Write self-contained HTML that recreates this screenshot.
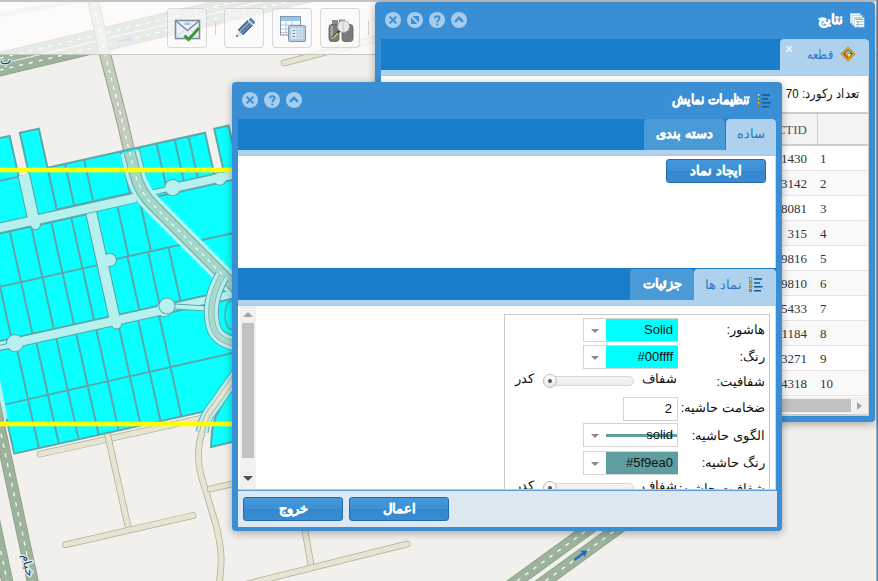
<!DOCTYPE html>
<html><head><meta charset="utf-8">
<style>
*{box-sizing:border-box;margin:0;padding:0}
html,body{width:878px;height:581px;overflow:hidden;background:#f2f0ec;font-family:"Liberation Sans",sans-serif;}
.abs{position:absolute}
#map{position:absolute;left:0;top:0;width:878px;height:581px}
#topbar{position:absolute;left:0;top:0;width:878px;height:2px;background:#c4c4c4}
#toolbar{position:absolute;left:0;top:2px;width:878px;height:53px;background:rgba(255,255,255,0.74);border-bottom:1px solid #c6c6c4}
.tb{position:absolute;top:8px;width:40px;height:40px;border:1px solid rgba(190,190,190,0.55);border-radius:4px;background:rgba(250,250,250,0.5)}
.tb svg{position:absolute;left:0;top:0}
.sep{position:absolute;top:21px;width:1px;height:14px;background:#d2d2d2}
.win{position:absolute;background:#3a8fd4;border-radius:4px;box-shadow:0 2px 8px rgba(0,0,0,0.32)}
.ttl{position:absolute;color:#fff;font-weight:bold;font-size:14px;direction:rtl;white-space:nowrap;-webkit-text-stroke:0.35px #fff}
.ic{position:absolute;top:10px;width:16px;height:16px}
.strip{position:absolute;background:#187ecb}
.lstrip{position:absolute;background:#aed2ee}
.tab{position:absolute;border-radius:4px 4px 0 0;text-align:center;direction:rtl;white-space:nowrap;font-size:13px}
.tab.act{background:#aed2ee;color:#2a78c2}
.tab.ina{background:#4b9ad8;color:#fff;font-weight:bold;-webkit-text-stroke:0.3px #fff}
.btn{position:absolute;border:1px solid #1e6cb4;border-radius:3px;background:linear-gradient(#4597da 0%,#3d90d6 50%,#3587cd 51%,#3a8bd0 100%);color:#fff;font-weight:bold;font-size:13px;text-align:center;direction:rtl;-webkit-text-stroke:0.3px #fff}
.lbl{position:absolute;font-size:13px;direction:rtl;white-space:nowrap;color:#111;line-height:16px}
.sel{position:absolute;border:1px solid #d4d4d4;background:#fff;width:95px;height:24px}
.sel .arr{position:absolute;left:7px;top:10px;width:0;height:0;border-left:4px solid transparent;border-right:4px solid transparent;border-top:4.5px solid #8a8a8a}
.sel .val{position:absolute;left:22px;top:0;width:72px;height:22px;font-size:13px;text-align:right;padding-right:5px;line-height:22px;color:#111}
.row{position:absolute;left:0;width:488px;height:25px;border-bottom:1px solid #e6e6e6}
.cell{position:absolute;font-family:"Liberation Serif",serif;font-size:13px;color:#333;line-height:25px;white-space:nowrap}
.slider{position:absolute;width:91px;height:10px;border:1px solid #d6d6d6;border-radius:5px;background:linear-gradient(#f4f4f4,#ececec)}
.knob{position:absolute;left:-1px;top:-3px;width:14px;height:14px;border-radius:50%;border:1px solid #bdbdbd;background:linear-gradient(#fff,#e6e6e6)}
.knob:after{content:"";position:absolute;left:4px;top:4px;width:4px;height:4px;border-radius:50%;background:#555}
</style></head><body>
<svg id="map" width="878" height="581" viewBox="0 0 878 581"><rect width="878" height="581" fill="#f2f0ec"/><path d="M40.2,454.1 L244.3,408.8" fill="none" stroke="#a9b09a" stroke-width="6.7" stroke-linecap="round" stroke-linejoin="round"/><path d="M40.2,454.1 L244.3,408.8" fill="none" stroke="#e7e5d1" stroke-width="5.2" stroke-linecap="round" stroke-linejoin="round"/><path d="M107.7,435.0 L128.7,529.7" fill="none" stroke="#a9b09a" stroke-width="6.7" stroke-linecap="round" stroke-linejoin="round"/><path d="M107.7,435.0 L128.7,529.7" fill="none" stroke="#e7e5d1" stroke-width="5.2" stroke-linecap="round" stroke-linejoin="round"/><path d="M65.5,544.7 L193.1,515.4" fill="none" stroke="#a9b09a" stroke-width="6.7" stroke-linecap="round" stroke-linejoin="round"/><path d="M65.5,544.7 L193.1,515.4" fill="none" stroke="#e7e5d1" stroke-width="5.2" stroke-linecap="round" stroke-linejoin="round"/><path d="M205,425 C199,438 196,455 201,475 L216,525 C221,545 223,560 219,585" fill="none" stroke="#a9b09a" stroke-width="6.7"/><path d="M205,425 C199,438 196,455 201,475 L216,525 C221,545 223,560 219,585" fill="none" stroke="#e7e5d1" stroke-width="5.2"/><path d="M210.0,489.0 L240.0,482.0" fill="none" stroke="#a9b09a" stroke-width="6.7" stroke-linecap="round" stroke-linejoin="round"/><path d="M210.0,489.0 L240.0,482.0" fill="none" stroke="#e7e5d1" stroke-width="5.2" stroke-linecap="round" stroke-linejoin="round"/><path d="M304.0,525.0 L311.0,565.0" fill="none" stroke="#a9b09a" stroke-width="6.7" stroke-linecap="round" stroke-linejoin="round"/><path d="M304.0,525.0 L311.0,565.0" fill="none" stroke="#e7e5d1" stroke-width="5.2" stroke-linecap="round" stroke-linejoin="round"/><path d="M243.0,585.0 L407.0,544.0" fill="none" stroke="#a9b09a" stroke-width="6.7" stroke-linecap="round" stroke-linejoin="round"/><path d="M243.0,585.0 L407.0,544.0" fill="none" stroke="#e7e5d1" stroke-width="5.2" stroke-linecap="round" stroke-linejoin="round"/><path d="M284.0,63.0 L380.0,38.0" fill="none" stroke="#a9b09a" stroke-width="6.5" stroke-linecap="round" stroke-linejoin="round"/><path d="M284.0,63.0 L380.0,38.0" fill="none" stroke="#e7e5d1" stroke-width="5" stroke-linecap="round" stroke-linejoin="round"/><path d="M315,52 L385,42" stroke="#c9ccc0" stroke-width="1" fill="none"/><path d="M-10.0,60.5 L330.0,-20.5" stroke="#869c86" stroke-width="12.5" fill="none"/><path d="M-10.0,60.5 L330.0,-20.5" stroke="#9db39c" stroke-width="11" fill="none"/><path d="M-10.0,60.5 L330.0,-20.5" stroke="#ffffff" stroke-width="1.4" stroke-dasharray="4 6" fill="none" opacity="0.9"/><path d="M-10.0,72.5 L330.0,-8.5" stroke="#869c86" stroke-width="12.5" fill="none"/><path d="M-10.0,72.5 L330.0,-8.5" stroke="#9db39c" stroke-width="11" fill="none"/><path d="M-10.0,72.5 L330.0,-8.5" stroke="#ffffff" stroke-width="1.4" stroke-dasharray="4 6" fill="none" opacity="0.9"/><path d="M-10,66.5 L330,-14.5" stroke="#ffffff" stroke-width="1.2" fill="none" opacity="0.8"/><path d="M-5,16 L80,0" stroke="#d9ddd5" stroke-width="5" fill="none"/><g transform="translate(125,40) rotate(-12)"><path d="M-8,-1 L3,-1 L3,-3.5 L8,0 L3,3.5 L3,1 L-8,1 Z" fill="#4f8fd6"/></g><path d="M92,-5 L105,54 L122,120 L128,146 L134.8,173" stroke="#95a28f" stroke-width="12" fill="none"/><path d="M92,-5 L105,54 L122,120 L128,146 L134.8,173" stroke="#c3ccbd" stroke-width="10" fill="none"/><path d="M92,-5 L105,54 L122,120 L128,146 L134.8,173" stroke="#ffffff" stroke-width="1.3" stroke-dasharray="3.5 5" fill="none"/><path d="M460.4,622.0 L656.0,480.0" stroke="#869c86" stroke-width="12.5" fill="none"/><path d="M460.4,622.0 L656.0,480.0" stroke="#9db39c" stroke-width="11" fill="none"/><path d="M460.4,622.0 L656.0,480.0" stroke="#ffffff" stroke-width="1.4" stroke-dasharray="4 6" fill="none" opacity="0.9"/><path d="M488.8,622.0 L684.8,480.0" stroke="#869c86" stroke-width="12.5" fill="none"/><path d="M488.8,622.0 L684.8,480.0" stroke="#9db39c" stroke-width="11" fill="none"/><path d="M488.8,622.0 L684.8,480.0" stroke="#ffffff" stroke-width="1.4" stroke-dasharray="4 6" fill="none" opacity="0.9"/><g transform="translate(581,555) rotate(-35.9)"><path d="M-8,-1.2 L2,-1.2 L2,-3.5 L8,0 L2,3.5 L2,1.2 L-8,1.2 Z" fill="#1f63a8" stroke="#5f94c8" stroke-width="0.6"/></g><g transform="rotate(-12.5)"><polygon points="-140.0,134.0 -20.0,134.0 -20.0,219.0 -9.4,219.0 -9.4,134.0 10.1,134.0 10.1,174.0 171.4,174.0 171.4,215.0 181.3,215.0 181.3,172.0 196.0,172.0 196.0,216.0 400.0,216.0 400.0,460.0 116.0,460.0 116.0,446.0 -84.3,446.0 -84.3,385.0 -140.0,385.0" fill="#b6f1ef" stroke="none" stroke-width="1.6"/><rect x="-140" y="134.7" width="120" height="83.5" fill="#0affff" stroke="#58a9ab" stroke-width="2"/><line x1="-140" y1="176.5" x2="-20" y2="176.5" stroke="#58a9ab" stroke-width="2"/><rect x="-9.4" y="134" width="19.5" height="84.19999999999999" fill="#0affff" stroke="#58a9ab" stroke-width="2"/><rect x="-20" y="176" width="10.6" height="44" fill="#b6f1ef"/><rect x="10.1" y="174" width="161.3" height="42.80000000000001" fill="#0affff" stroke="#58a9ab" stroke-width="2"/><rect x="90" y="215" width="38" height="11" fill="#0affff"/><line x1="90" y1="219.2" x2="128" y2="219.2" stroke="#58a9ab" stroke-width="2"/><line x1="28" y1="174" x2="28" y2="216.8" stroke="#58a9ab" stroke-width="2"/><line x1="47.5" y1="174" x2="47.5" y2="216.8" stroke="#58a9ab" stroke-width="2"/><line x1="85" y1="174" x2="85" y2="216.8" stroke="#58a9ab" stroke-width="2"/><line x1="103.3" y1="174" x2="103.3" y2="216.8" stroke="#58a9ab" stroke-width="2"/><line x1="121.8" y1="174" x2="121.8" y2="216.8" stroke="#58a9ab" stroke-width="2"/><line x1="140.3" y1="174" x2="140.3" y2="216.8" stroke="#58a9ab" stroke-width="2"/><line x1="154.6" y1="174" x2="154.6" y2="216.8" stroke="#58a9ab" stroke-width="2"/><rect x="181.3" y="172" width="14.699999999999989" height="44.5" fill="#0affff" stroke="#58a9ab" stroke-width="2"/><rect x="-140" y="228" width="178" height="105" fill="#0affff" stroke="#58a9ab" stroke-width="2"/><line x1="-140" y1="280" x2="38" y2="280" stroke="#58a9ab" stroke-width="2"/><line x1="-102" y1="228" x2="-102" y2="333" stroke="#58a9ab" stroke-width="2"/><line x1="-83" y1="228" x2="-83" y2="333" stroke="#58a9ab" stroke-width="2"/><line x1="-62" y1="228" x2="-62" y2="333" stroke="#58a9ab" stroke-width="2"/><line x1="-40.5" y1="228" x2="-40.5" y2="333" stroke="#58a9ab" stroke-width="2"/><line x1="-18.6" y1="228" x2="-18.6" y2="333" stroke="#58a9ab" stroke-width="2"/><line x1="2" y1="228" x2="2" y2="333" stroke="#58a9ab" stroke-width="2"/><line x1="22.5" y1="228" x2="22.5" y2="333" stroke="#58a9ab" stroke-width="2"/><rect x="48" y="226" width="352" height="107" fill="#0affff" stroke="#58a9ab" stroke-width="2"/><line x1="48" y1="278" x2="400" y2="278" stroke="#58a9ab" stroke-width="2"/><line x1="70" y1="226" x2="70" y2="278" stroke="#58a9ab" stroke-width="2"/><line x1="93" y1="226" x2="93" y2="278" stroke="#58a9ab" stroke-width="2"/><line x1="69" y1="278" x2="69" y2="333" stroke="#58a9ab" stroke-width="2"/><line x1="90" y1="278" x2="90" y2="333" stroke="#58a9ab" stroke-width="2"/><line x1="111" y1="278" x2="111" y2="333" stroke="#58a9ab" stroke-width="2"/><rect x="-84.3" y="342" width="484.3" height="104" fill="#0affff" stroke="#58a9ab" stroke-width="2"/><line x1="-84.3" y1="396" x2="400" y2="394" stroke="#58a9ab" stroke-width="2"/><line x1="-59" y1="342" x2="-59" y2="446" stroke="#58a9ab" stroke-width="2"/><line x1="-38.6" y1="342" x2="-38.6" y2="446" stroke="#58a9ab" stroke-width="2"/><line x1="-18.3" y1="342" x2="-18.3" y2="446" stroke="#58a9ab" stroke-width="2"/><line x1="2.2" y1="342" x2="2.2" y2="446" stroke="#58a9ab" stroke-width="2"/><line x1="22.7" y1="342" x2="22.7" y2="446" stroke="#58a9ab" stroke-width="2"/><line x1="45.3" y1="342" x2="45.3" y2="446" stroke="#58a9ab" stroke-width="2"/><line x1="65.6" y1="342" x2="65.6" y2="446" stroke="#58a9ab" stroke-width="2"/><line x1="87" y1="342" x2="87" y2="446" stroke="#58a9ab" stroke-width="2"/></g><g transform="rotate(-12.5)"><line x1="-140" y1="222.5" x2="90" y2="222.5" stroke="#58a9ab" stroke-width="10.5" stroke-linecap="butt"/><line x1="89" y1="221" x2="128" y2="221" stroke="#58a9ab" stroke-width="6" stroke-linecap="butt"/><line x1="128" y1="221" x2="300" y2="221" stroke="#58a9ab" stroke-width="10" stroke-linecap="butt"/><line x1="-14.7" y1="176" x2="-14.7" y2="223" stroke="#58a9ab" stroke-width="12.6" stroke-linecap="butt"/><line x1="43" y1="228" x2="43" y2="337" stroke="#58a9ab" stroke-width="12" stroke-linecap="butt"/><line x1="-60" y1="338" x2="94" y2="338" stroke="#58a9ab" stroke-width="10.5" stroke-linecap="butt"/><line x1="-140" y1="339.5" x2="-60" y2="339.5" stroke="#58a9ab" stroke-width="6" stroke-linecap="butt"/><circle cx="128" cy="220.5" r="8.5" fill="#58a9ab"/><circle cx="176" cy="222" r="7" fill="#58a9ab"/><circle cx="-59.5" cy="338.3" r="9" fill="#58a9ab"/><circle cx="51" cy="277.6" r="7" fill="#58a9ab"/><circle cx="93.7" cy="337" r="8.5" fill="#58a9ab"/><circle cx="43.6" cy="341" r="6" fill="#58a9ab"/><circle cx="-14" cy="227" r="5.5" fill="#58a9ab"/><line x1="-140" y1="222.5" x2="90" y2="222.5" stroke="#b6f1ef" stroke-width="8.5" stroke-linecap="butt"/><line x1="89" y1="221" x2="128" y2="221" stroke="#b6f1ef" stroke-width="4" stroke-linecap="butt"/><line x1="128" y1="221" x2="300" y2="221" stroke="#b6f1ef" stroke-width="8" stroke-linecap="butt"/><line x1="-14.7" y1="176" x2="-14.7" y2="223" stroke="#b6f1ef" stroke-width="10.6" stroke-linecap="butt"/><line x1="43" y1="228" x2="43" y2="337" stroke="#b6f1ef" stroke-width="10" stroke-linecap="butt"/><line x1="-60" y1="338" x2="94" y2="338" stroke="#b6f1ef" stroke-width="8.5" stroke-linecap="butt"/><line x1="-140" y1="339.5" x2="-60" y2="339.5" stroke="#b6f1ef" stroke-width="4" stroke-linecap="butt"/><circle cx="128" cy="220.5" r="7.5" fill="#b6f1ef"/><circle cx="176" cy="222" r="6" fill="#b6f1ef"/><circle cx="-59.5" cy="338.3" r="8" fill="#b6f1ef"/><circle cx="51" cy="277.6" r="6" fill="#b6f1ef"/><circle cx="93.7" cy="337" r="7.5" fill="#b6f1ef"/><circle cx="43.6" cy="341" r="5" fill="#b6f1ef"/><circle cx="-14" cy="227" r="4.5" fill="#b6f1ef"/></g><path d="M129.6,152 L134.8,173 C137,182 143,196 154,206 L300,352" stroke="#b6f1ef" stroke-width="19" fill="none"/><path d="M129.6,152 L134.8,173 C137,182 143,196 154,206 L300,352" stroke="#6fa9a3" stroke-width="12" fill="none"/><path d="M129.6,152 L134.8,173 C137,182 143,196 154,206 L300,352" stroke="#a2d7c9" stroke-width="10" fill="none"/><path d="M129.6,152 L134.8,173 C137,182 143,196 154,206 L300,352" stroke="#e8fbf6" stroke-width="1.3" stroke-dasharray="3.5 5" fill="none"/><path d="M167,306 L214,309" stroke="#58a9ab" stroke-width="6" fill="none"/><path d="M167,306 L214,309" stroke="#b6f1ef" stroke-width="4" fill="none"/><circle cx="167" cy="306" r="8.6" fill="#58a9ab"/><circle cx="167" cy="306" r="7.6" fill="#b6f1ef"/><path d="M222,276 C213,292 209,310 213,326 C216,338 226,343 242,345" stroke="#58a9ab" stroke-width="15" fill="none"/><path d="M222,276 C213,292 209,310 213,326 C216,338 226,343 242,345" stroke="#b6f1ef" stroke-width="13" fill="none"/><path d="M222,276 C213,292 209,310 213,326 C216,338 226,343 242,345" stroke="#7fb3ad" stroke-width="6.5" fill="none"/><path d="M222,276 C213,292 209,310 213,326 C216,338 226,343 242,345" stroke="#a9d9cc" stroke-width="5" fill="none"/><ellipse cx="231" cy="315" rx="6" ry="14" fill="#0affff" stroke="#58a9ab" stroke-width="1.4"/><polygon points="211,447 232,442 244,442 244,372 226,398 216,416 212,430" fill="#0affff" stroke="#58a9ab" stroke-width="2"/><path d="M244,364 L215,405 C208,414 204,420 202,432" stroke="#58a9ab" stroke-width="13" fill="none"/><path d="M244,364 L215,405 C208,414 204,420 202,432" stroke="#b6f1ef" stroke-width="11" fill="none"/><path d="M244,364 L215,405 C208,414 204,420 202,432" stroke="#a9b09a" stroke-width="5.5" fill="none"/><path d="M244,364 L215,405 C208,414 204,420 202,432" stroke="#e7e5d1" stroke-width="4" fill="none"/><path d="M-9.1,375 L0,420" stroke="#b6f1ef" stroke-width="16" fill="none"/><path d="M-20,452 L20,452" stroke="#f2f0ec" stroke-width="0" fill="none"/><path d="M-9.5,385.0 L35.0,592.0" stroke="#869c86" stroke-width="12.0" fill="none"/><path d="M-9.5,385.0 L35.0,592.0" stroke="#9db39c" stroke-width="10.5" fill="none"/><path d="M-9.5,385.0 L35.0,592.0" stroke="#ffffff" stroke-width="1.4" stroke-dasharray="4 6" fill="none" opacity="0.9"/><path d="M-35.0,385.0 L9.5,592.0" stroke="#869c86" stroke-width="12.0" fill="none"/><path d="M-35.0,385.0 L9.5,592.0" stroke="#9db39c" stroke-width="10.5" fill="none"/><path d="M-35.0,385.0 L9.5,592.0" stroke="#ffffff" stroke-width="1.4" stroke-dasharray="4 6" fill="none" opacity="0.9"/><text x="0" y="0" transform="translate(24,566) rotate(77)" font-family="Liberation Sans, sans-serif" font-size="12" fill="#1d3d5c" stroke="#e8f4f4" stroke-width="2.5" paint-order="stroke" text-anchor="middle">خیام</text><text x="0" y="64" font-family="Liberation Sans, sans-serif" font-size="12" fill="#1d3d5c" stroke="#d8ecec" stroke-width="2" paint-order="stroke">ب</text><rect x="0" y="167.7" width="240" height="4.6" fill="#ffff00"/><rect x="0" y="421.7" width="240" height="4.6" fill="#ffff00"/></svg>

<div id="topbar"></div>
<div id="toolbar"></div>
<!-- toolbar buttons -->
<div class="tb" style="left:167px">
 <svg width="40" height="40" viewBox="0 0 40 40">
  <rect x="7.5" y="11.5" width="24" height="18" fill="#eaf1f8" stroke="#7d8c9c" stroke-width="1.6"/>
  <path d="M8,12 L19.5,21.5 L31,12" fill="none" stroke="#7d8c9c" stroke-width="1.6"/>
  <path d="M8,29 L16,21 M31,29 L23,21" fill="none" stroke="#c6d4e2" stroke-width="1"/>
  <rect x="16.5" y="13.5" width="6" height="2.5" fill="#a9c3dc"/>
  <path d="M16.5,26.5 L20.5,30.5 L31,19" fill="none" stroke="#3c9a2c" stroke-width="3"/>
 </svg>
</div>
<div class="sep" style="left:215px"></div>
<div class="tb" style="left:224px">
 <svg width="40" height="40" viewBox="0 0 40 40">
  <g transform="rotate(45 19 20)">
   <rect x="15.5" y="11" width="7" height="14" fill="#4b6d9a" stroke="#3e5b82" stroke-width="0.8"/>
   <rect x="17.3" y="11" width="1.2" height="14" fill="#9db6d6"/>
   <rect x="20" y="11" width="1" height="14" fill="#7d98bd"/>
   <rect x="15.5" y="7" width="7" height="3.5" rx="1.5" fill="#5a80b5"/>
   <rect x="15.5" y="10" width="7" height="1.5" fill="#dbe6f2"/>
   <path d="M15.5,25 L22.5,25 L19,31 Z" fill="#dbe6f2"/>
   <path d="M17.8,29 L20.2,29 L19,31.5 Z" fill="#555"/>
  </g>
 </svg>
</div>
<div class="tb" style="left:272px">
 <svg width="40" height="40" viewBox="0 0 40 40">
  <rect x="7.5" y="7.5" width="20" height="18.5" fill="#fafcfe" stroke="#8796a6" stroke-width="1"/>
  <rect x="8" y="8" width="19" height="4" fill="#8cc8f2"/>
  <path d="M8,16 H27 M8,20 H27 M8,23.5 H27 M13,12 V26 M19,12 V26" stroke="#b6c2ce" stroke-width="0.9"/>
  <rect x="15.5" y="16.5" width="17" height="16" rx="1.5" fill="#b7cade" stroke="#8396aa" stroke-width="1"/>
  <rect x="18" y="19" width="12" height="11" fill="#dde8f3"/>
  <rect x="23" y="19.5" width="6.5" height="10" fill="#c5d7ea"/>
  <path d="M19.5,21.5 H22 M19.5,24.5 H22 M19.5,27.5 H22" stroke="#6c86a3" stroke-width="1.2"/>
 </svg>
</div>
<div class="tb" style="left:320px">
 <svg width="40" height="40" viewBox="0 0 40 40">
  <rect x="11" y="11" width="6" height="5" fill="#8a8a8a"/>
  <rect x="18" y="10.5" width="6" height="5" fill="#8a8a8a"/>
  <rect x="8" y="15.5" width="10" height="17" rx="3" fill="#7b7b7b" stroke="#5d5d5d" stroke-width="0.8"/>
  <rect x="21" y="15.5" width="11" height="17" rx="3" fill="#7b7b7b" stroke="#5d5d5d" stroke-width="0.8"/>
  <rect x="9.5" y="17" width="2.5" height="13" fill="#a8a8a8"/>
  <circle cx="22.5" cy="17.5" r="6" fill="#e9e9e9" stroke="#9a9a9a" stroke-width="0.8"/>
  <path d="M22.5,12 V23" stroke="#cfcfcf" stroke-width="1.5"/>
  <path d="M18.5,22 L11,29" stroke="#3a3a3a" stroke-width="2"/>
  <path d="M17,24 L11.5,29.5" stroke="#e8c84a" stroke-width="1.6"/>
 </svg>
</div>
<div class="sep" style="left:368px"></div>

<!-- right strip -->
<div class="abs" style="left:876px;top:0;width:1px;height:581px;background:#a2aab0"></div>
<div class="abs" style="left:877px;top:0;width:1px;height:581px;background:#3a8fd4"></div>

<!-- Window 1: results -->
<div class="win" id="w1" style="left:375px;top:2px;width:500px;height:420px">
  <svg class="ic" style="left:10px" viewBox="0 0 16 16"><circle cx="8" cy="8" r="8" fill="#a6cdee"/><path d="M4.6,4.6 L11.4,11.4 M11.4,4.6 L4.6,11.4" stroke="#3a8fd4" stroke-width="2"/></svg>
  <svg class="ic" style="left:32px" viewBox="0 0 16 16"><circle cx="8" cy="8" r="8" fill="#a6cdee"/><rect x="4" y="4" width="8" height="8" fill="#3a8fd4"/><path d="M3.5,3.5 L12.5,12.5" stroke="#a6cdee" stroke-width="2.2"/></svg>
  <svg class="ic" style="left:54px" viewBox="0 0 16 16"><circle cx="8" cy="8" r="8" fill="#a6cdee"/><path d="M6,6.2 C6,3.6 10.6,3.6 10.6,6 C10.6,8 8.3,8 8.3,10.3" fill="none" stroke="#3a8fd4" stroke-width="1.9"/><rect x="7.3" y="11.6" width="2" height="1.9" fill="#3a8fd4"/></svg>
  <svg class="ic" style="left:76px" viewBox="0 0 16 16"><circle cx="8" cy="8" r="8" fill="#a6cdee"/><path d="M4,9.8 L8,5.8 L12,9.8" fill="none" stroke="#3a8fd4" stroke-width="2.4"/></svg>
  <div class="ttl" style="right:32px;top:9px">نتایج</div>
  <svg class="abs" style="left:474px;top:10px" width="16" height="16" viewBox="0 0 16 16">
    <rect x="1.5" y="1.5" width="9.5" height="9.5" fill="#e9f1fa" stroke="#c7d9ec" stroke-width="0.8"/>
    <rect x="3.5" y="3.5" width="9.5" height="9.5" fill="#f1f6fb" stroke="#c7d9ec" stroke-width="0.8"/>
    <rect x="5.5" y="5.5" width="9.5" height="9.5" fill="#ffffff" stroke="#b9cde3" stroke-width="0.8"/>
    <rect x="6.5" y="6.5" width="7.5" height="1.3" fill="#6ab84a"/>
    <path d="M7,9.8 H14 M7,12.5 H14 M8.8,8.8 V14.5" stroke="#8fb0d6" stroke-width="0.9"/>
  </svg>
  <div class="strip" style="left:6px;top:37px;width:488px;height:31px"></div>
  <div class="tab act" style="left:405px;top:37px;width:89px;height:31px"></div>
  <div class="abs" style="left:410px;top:40px;color:#fff;font-size:14px;line-height:14px">&#215;</div>
  <div class="abs" style="left:410px;top:45px;width:48px;text-align:right;direction:rtl;color:#2a78c2;font-size:13px;line-height:16px;transform:scaleX(0.86);transform-origin:right center">قطعه</div>
  <svg class="abs" style="left:465px;top:44px" width="16" height="16" viewBox="0 0 16 16">
    <path d="M8,0.8 L15.2,8 L8,15.2 L0.8,8 Z" fill="#e9a92a" stroke="#b98018" stroke-width="0.8"/>
    <path d="M8,3.2 L12.8,8 L8,12.8 L3.2,8 Z" fill="#222"/>
    <path d="M8,4 L11.5,7.2 L8,8 L4.2,7.8 Z" fill="#7cc4ee"/>
    <path d="M4,8 L8,8 L8,12 Z" fill="#f07a3a"/>
    <path d="M8,8 L12,8 L8,12 Z" fill="#f2ea50"/>
  </svg>
  <div class="lstrip" style="left:6px;top:68px;width:488px;height:6px;border-bottom:1px solid #c0c4c6"></div>
  <div class="abs" style="left:6px;top:74px;width:488px;height:340px;background:#fff;border-right:1px solid #cfcfcf"></div>
  <div class="abs" style="left:360px;top:84px;width:125px;text-align:right;direction:rtl;font-size:13px;color:#111;line-height:16px;white-space:nowrap;transform:scaleX(0.89);transform-origin:right center">تعداد رکورد: 70</div>
  <!-- table -->
  <div class="abs" style="left:6px;top:110px;width:487px;height:304px;overflow:hidden">
    <div class="abs" style="left:0;top:0;width:487px;height:2px;background:#cbcbcb"></div>
    <div class="abs" style="left:0;top:2px;width:487px;height:32px;background:#f3f3f3;border-bottom:2px solid #cdcdcd"></div>
    <div class="abs" style="left:436px;top:2px;width:1px;height:30px;background:#cdcdcd"></div>
    <div class="cell" style="left:380px;top:5px;width:46px;text-align:right;color:#555;font-size:13px">CTID</div>
    <div class="abs" style="left:0;top:34px;width:487px;">
      <div class="row" style="top:0;background:#fff"><div class="cell" style="left:380px;width:46px;text-align:right">11430</div><div class="cell" style="left:439px">1</div></div>
      <div class="row" style="top:25px;background:#f9f9f9"><div class="cell" style="left:380px;width:46px;text-align:right">13142</div><div class="cell" style="left:439px">2</div></div>
      <div class="row" style="top:50px;background:#fff"><div class="cell" style="left:380px;width:46px;text-align:right">18081</div><div class="cell" style="left:439px">3</div></div>
      <div class="row" style="top:75px;background:#f9f9f9"><div class="cell" style="left:380px;width:46px;text-align:right">315</div><div class="cell" style="left:439px">4</div></div>
      <div class="row" style="top:100px;background:#fff"><div class="cell" style="left:380px;width:46px;text-align:right">19816</div><div class="cell" style="left:439px">5</div></div>
      <div class="row" style="top:125px;background:#f9f9f9"><div class="cell" style="left:380px;width:46px;text-align:right">19810</div><div class="cell" style="left:439px">6</div></div>
      <div class="row" style="top:150px;background:#fff"><div class="cell" style="left:380px;width:46px;text-align:right">15433</div><div class="cell" style="left:439px">7</div></div>
      <div class="row" style="top:175px;background:#f9f9f9"><div class="cell" style="left:380px;width:46px;text-align:right">11184</div><div class="cell" style="left:439px">8</div></div>
      <div class="row" style="top:200px;background:#fff"><div class="cell" style="left:380px;width:46px;text-align:right">13271</div><div class="cell" style="left:439px">9</div></div>
      <div class="row" style="top:225px;background:#f9f9f9"><div class="cell" style="left:380px;width:46px;text-align:right">14318</div><div class="cell" style="left:439px">10</div></div>
    </div>
    <!-- h scrollbar -->
    <div class="abs" style="left:0;top:285px;width:487px;height:19px;background:#f1f1f1;border-bottom:2px solid #cfcfcf"></div>
    <div class="abs" style="left:0;top:287px;width:470px;height:13px;background:#c1c1c1"></div>
    <div class="abs" style="left:476px;top:290px;width:0;height:0;border-top:4px solid transparent;border-bottom:4px solid transparent;border-left:5px solid #a3a3a3"></div>
  </div>
</div>

<!-- Window 2: display settings -->
<div class="win" id="w2" style="left:232px;top:82px;width:550px;height:449px">
  <svg class="ic" style="left:10px" viewBox="0 0 16 16"><circle cx="8" cy="8" r="8" fill="#a6cdee"/><path d="M4.6,4.6 L11.4,11.4 M11.4,4.6 L4.6,11.4" stroke="#3a8fd4" stroke-width="2"/></svg>
  <svg class="ic" style="left:32px" viewBox="0 0 16 16"><circle cx="8" cy="8" r="8" fill="#a6cdee"/><path d="M6,6.2 C6,3.6 10.6,3.6 10.6,6 C10.6,8 8.3,8 8.3,10.3" fill="none" stroke="#3a8fd4" stroke-width="1.9"/><rect x="7.3" y="11.6" width="2" height="1.9" fill="#3a8fd4"/></svg>
  <svg class="ic" style="left:54px" viewBox="0 0 16 16"><circle cx="8" cy="8" r="8" fill="#a6cdee"/><path d="M4,9.8 L8,5.8 L12,9.8" fill="none" stroke="#3a8fd4" stroke-width="2.4"/></svg>
  <div class="ttl" style="right:32px;top:9px;transform:scaleX(0.87);transform-origin:right center">تنظیمات نمایش</div>
  <svg class="abs" style="left:524px;top:10px" width="16" height="16" viewBox="0 0 16 16">
    <rect x="1.3" y="1.5" width="2.6" height="2.6" fill="#c9dbe8" stroke="#4a5c6e" stroke-width="0.5"/>
    <rect x="1.3" y="5.4" width="2.6" height="2.6" fill="#b2cc3a" stroke="#5f7a1c" stroke-width="0.5"/>
    <rect x="1.3" y="9.3" width="2.6" height="2.6" fill="#f7b030" stroke="#a86010" stroke-width="0.5"/>
    <rect x="1.3" y="13.2" width="2.6" height="2.6" fill="#e8884a" stroke="#9a4a20" stroke-width="0.5"/>
    <path d="M6,3 H14 M6,6.9 H12 M6,10.8 H14.5 M6,14.7 H13" stroke="#0b5a92" stroke-width="1.5"/>
  </svg>
  <div class="strip" style="left:6px;top:37px;width:538px;height:31px"></div>
  <div class="tab act" style="left:494px;top:37px;width:50px;height:31px;line-height:30px">ساده</div>
  <div class="tab ina" style="left:412px;top:37px;width:81px;height:31px;line-height:30px">دسته بندی</div>
  <div class="lstrip" style="left:6px;top:68px;width:538px;height:6px;border-bottom:1px solid #c0c4c6"></div>
  <div class="abs" style="left:6px;top:74px;width:538px;height:112px;background:#fff;border-right:1px solid #d8d8d8"></div>
  <div class="btn" style="left:434px;top:77px;width:100px;height:24px;line-height:22px">ایجاد نماد</div>
  <div class="strip" style="left:6px;top:186px;width:538px;height:32px"></div>
  <div class="tab act" style="left:462px;top:187px;width:82px;height:31px"></div>
  <div class="abs" style="left:458px;top:195px;width:52px;text-align:right;direction:rtl;color:#2a78c2;font-size:13px;line-height:16px;white-space:nowrap">نماد ها</div>
  <svg class="abs" style="left:516px;top:194px" width="16" height="16" viewBox="0 0 16 16">
    <rect x="1.3" y="1.5" width="2.6" height="2.6" fill="#c9dbe8" stroke="#4a5c6e" stroke-width="0.5"/>
    <rect x="1.3" y="5.4" width="2.6" height="2.6" fill="#b2cc3a" stroke="#5f7a1c" stroke-width="0.5"/>
    <rect x="1.3" y="9.3" width="2.6" height="2.6" fill="#f7b030" stroke="#a86010" stroke-width="0.5"/>
    <rect x="1.3" y="13.2" width="2.6" height="2.6" fill="#e8884a" stroke="#9a4a20" stroke-width="0.5"/>
    <path d="M6,3 H14 M6,6.9 H12 M6,10.8 H14.5 M6,14.7 H13" stroke="#0b5a92" stroke-width="1.5"/>
  </svg>
  <div class="tab ina" style="left:398px;top:187px;width:64px;height:31px;line-height:30px">جزئیات</div>
  <div class="lstrip" style="left:6px;top:218px;width:538px;height:6px;border-bottom:1px solid #c0c4c6"></div>
  <!-- scroll area -->
  <div class="abs" style="left:6px;top:223px;width:538px;height:184px;background:#fff;overflow:hidden;border-right:1px solid #d8d8d8">
    <!-- v scrollbar -->
    <div class="abs" style="left:2px;top:0;width:16px;height:185px;background:#f1f1f1"></div>
    <div class="abs" style="left:5px;top:7px;width:0;height:0;border-left:5px solid transparent;border-right:5px solid transparent;border-bottom:5px solid #a3a3a3"></div>
    <div class="abs" style="left:4px;top:18px;width:12px;height:135px;background:#c1c1c1"></div>
    <div class="abs" style="left:5px;top:171px;width:0;height:0;border-left:5px solid transparent;border-right:5px solid transparent;border-top:5px solid #505050"></div>
    <!-- form panel -->
    <div class="abs" style="left:266px;top:9px;width:266px;height:200px;border:1px solid #c8c8c8;background:#fff"></div>
    <div class="lbl" style="right:10px;top:17px">هاشور:</div>
    <div class="sel" style="left:345px;top:13px"><div class="arr"></div><div class="val" style="background:#00ffff">Solid</div></div>
    <div class="lbl" style="right:10px;top:44px">رنگ:</div>
    <div class="sel" style="left:345px;top:40px"><div class="arr"></div><div class="val" style="background:#00ffff">#00ffff</div></div>
    <div class="lbl" style="right:10px;top:69px">شفافیت:</div>
    <div class="lbl" style="left:404px;top:66px">شفاف</div>
    <div class="slider" style="left:305px;top:71px"><div class="knob"></div></div>
    <div class="lbl" style="left:277px;top:66px">کدر</div>
    <div class="lbl" style="right:10px;top:95px">ضخامت حاشیه:</div>
    <div class="abs" style="left:385px;top:92px;width:55px;height:24px;border:1px solid #d4d4d4;text-align:right;padding-right:5px;font-size:13px;line-height:22px;color:#111">2</div>
    <div class="lbl" style="right:10px;top:123px">الگوی حاشیه:</div>
    <div class="sel" style="left:345px;top:118px"><div class="arr"></div><div class="abs" style="left:22px;top:10px;width:71px;height:2.5px;background:#5f9ea0"></div><div class="val" style="background:transparent">solid</div></div>
    <div class="lbl" style="right:10px;top:150px">رنگ حاشیه:</div>
    <div class="sel" style="left:345px;top:146px"><div class="arr"></div><div class="val" style="background:#5f9ea0">#5f9ea0</div></div>
    <div class="lbl" style="right:10px;top:176px">شفافیت حاشیه:</div>
    <div class="lbl" style="left:404px;top:173px">شفاف</div>
    <div class="slider" style="left:305px;top:178px"><div class="knob"></div></div>
    <div class="lbl" style="left:277px;top:173px">کدر</div>
  </div>
  <div class="abs" style="left:6px;top:223px;width:538px;height:1px;background:#c0c4c6"></div>
  <div class="abs" style="left:6px;top:407px;width:538px;height:1px;background:#c9c9c9"></div>
  <div class="abs" style="left:6px;top:408px;width:539px;height:37px;background:#dee8f2;border-top:1px solid #5a9fda"></div>
  <div class="btn" style="left:11px;top:415px;width:100px;height:24px;line-height:22px">خروج</div>
  <div class="btn" style="left:117px;top:415px;width:100px;height:24px;line-height:22px">اعمال</div>
</div>
</body></html>
